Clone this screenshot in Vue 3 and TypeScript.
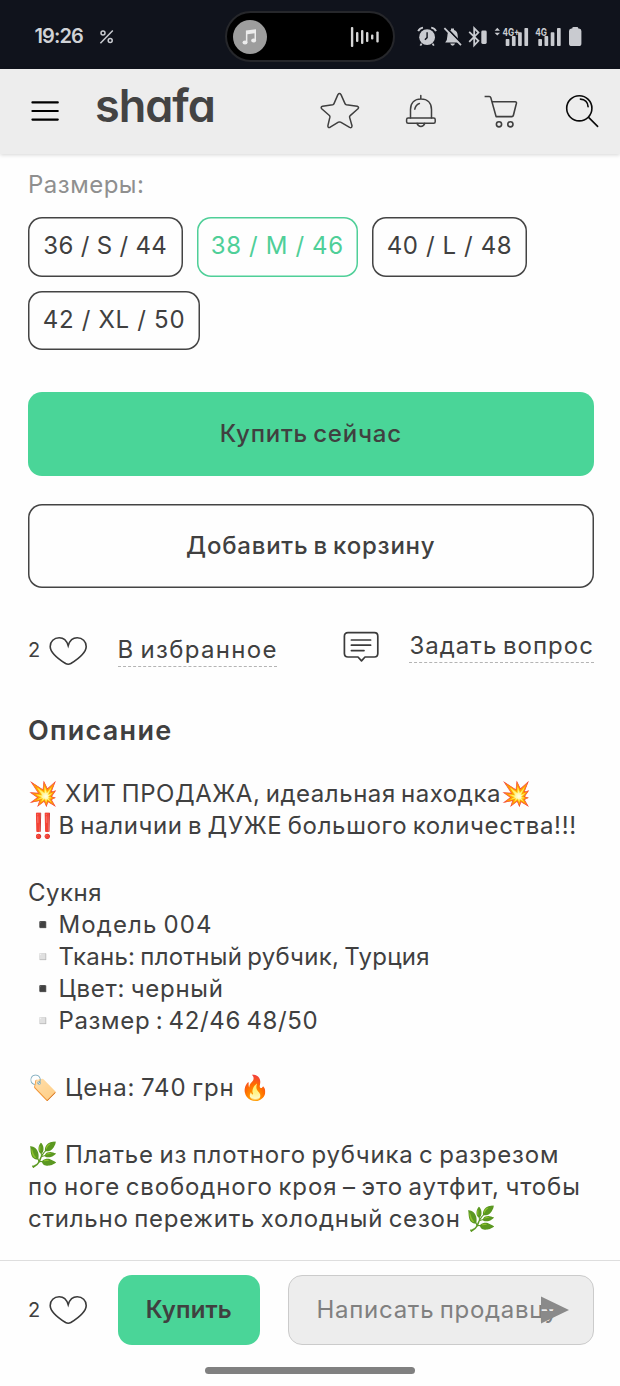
<script setup lang="ts">
interface Run { text: string; ls: number; emoji?: string; tail?: string; tight?: boolean }

const sizes = [
  { label: '36 / S / 44', ls: 0.31, width: 154.5 },
  { label: '38 / M / 46', ls: 0.63, width: 161.5, active: true },
  { label: '40 / L / 48', ls: 0.6, width: 155 },
  { label: '42 / XL / 50', ls: 0.7, width: 172 },
]

const paragraphs: Run[][] = [
  [
    { emoji: '💥', text: 'ХИТ ПРОДАЖА, идеальная находка', ls: 0.54, tail: '💥' },
    { emoji: '‼️', text: 'В наличии в ДУЖЕ большого количества!!!', ls: 0.64, tight: true },
  ],
  [
    { text: 'Сукня', ls: 0.5 },
    { emoji: '▪️', text: 'Модель 004', ls: 1.12, tight: true },
    { emoji: '▫️', text: 'Ткань: плотный рубчик, Турция', ls: 0.28, tight: true },
    { emoji: '▪️', text: 'Цвет: черный', ls: 0.74, tight: true },
    { emoji: '▫️', text: 'Размер : 42/46 48/50', ls: 0.65, tight: true },
  ],
  [{ emoji: '🏷️', text: 'Цена: 740 грн', ls: 0.9, tail: ' 🔥' }],
  [
    { emoji: '🌿', text: 'Платье из плотного рубчика с разрезом', ls: 0.8 },
    { text: 'по ноге свободного кроя – это аутфит, чтобы', ls: 0.88 },
    { text: 'стильно пережить холодный сезон', ls: 0.77, tail: ' 🌿' },
  ],
]

const wave = [
  { x: 0.9, h: 20 }, { x: 6, h: 10 }, { x: 11, h: 14 }, { x: 16, h: 10 }, { x: 21, h: 5 }, { x: 26.3, h: 11 },
]
const heart =
  'M20.2 9.7C18.6 4.2 15.4 1.8 11.2 1.8C6 1.8 2.2 5.4 2.2 10.4C2.2 17.2 11.4 23.6 17.6 27.5Q20.2 28.9 22.8 27.5C29 23.6 38.2 17.2 38.2 10.4C38.2 5.4 34.4 1.8 29.2 1.8C25 1.8 21.8 4.2 20.2 9.7Z'
const bars = [
  { x: 0, y: 17 }, { x: 6.2, y: 14 }, { x: 12.4, y: 10.3 }, { x: 18.7, y: 6 },
]
</script>

<template>
  <div class="screen">
    <div class="status">
      <span class="clock">19:26</span>
      <svg class="percent" width="16" height="16" viewBox="0 0 16 16" fill="none" stroke="#c9cbd0" stroke-width="1.5">
        <circle cx="4" cy="4.1" r="2" /><circle cx="11.2" cy="11.5" r="2" /><path d="M13.8 1.4L1.4 14.2" />
      </svg>
      <div class="island">
        <span class="disc">
          <svg width="20" height="20" viewBox="0 0 20 20" fill="#ececec">
            <path d="M5.9 3.6L16 2.2V13.4H14.5V6.3L7.4 7.2V15.4H5.9Z" />
            <ellipse cx="5" cy="15.4" rx="2.5" ry="2" /><ellipse cx="13.6" cy="13.6" rx="2.5" ry="2" />
          </svg>
        </span>
        <svg width="29" height="22" viewBox="0 0 29 22" fill="#d6d6d6">
          <rect v-for="w in wave" :key="w.x" :x="w.x" :y="11 - w.h / 2" width="2.4" :height="w.h" rx="1" />
        </svg>
      </div>
      <svg class="indicators" width="170" height="30" viewBox="0 0 170 30" fill="#c9cbd0">
        <circle cx="12.1" cy="15.2" r="7.9" />
        <path d="M3.2 9.2Q4.6 6 8 5.6M21 9.2Q19.6 6 16.2 5.6" fill="none" stroke="#c9cbd0" stroke-width="1.9" />
        <path d="M6.6 21.6L5.4 23.6M17.6 21.6L18.8 23.6" stroke="#c9cbd0" stroke-width="1.8" />
        <path d="M12.1 10.2V15.6L9.9 17.8" fill="none" stroke="#10131c" stroke-width="1.4" />
        <path d="M30.2 20.4Q32.4 18.4 32.4 13.8Q32.4 9 36 8V6.5H39V8Q42.7 9 42.7 13.8Q42.7 18.4 45 20.4ZM35.2 21.6H40Q39.5 23.7 37.6 23.7Q35.7 23.7 35.2 21.6Z" />
        <path d="M31.4 5.6L47.4 22.4" stroke="#10131c" stroke-width="1.8" /><path d="M29.4 6.2L46 23.2" stroke="#c9cbd0" stroke-width="1.8" />
        <path d="M54.2 9.8L63.4 18.8L59.2 23.3V6.2L63.4 10.6L54.2 19.8" fill="none" stroke="#c9cbd0" stroke-width="1.8" />
        <rect x="66.3" y="8.6" width="5.4" height="13.4" rx="1.4" />
        <path d="M79.6 8.8L82.3 5.8L85 8.8ZM79.6 10.8L82.3 13.6L85 10.8Z" />
        <text x="87.4" y="13.6" class="net" textLength="17.2" lengthAdjust="spacingAndGlyphs">4G+</text>
        <text x="120.2" y="13.6" class="net" textLength="11.8" lengthAdjust="spacingAndGlyphs">4G</text>
        <rect v-for="b in bars" :key="'a' + b.x" :x="90.7 + b.x" :y="b.y" width="3.7" :height="24 - b.y" rx="0.8" />
        <rect v-for="b in bars" :key="'b' + b.x" :x="123.3 + b.x" :y="b.y" width="3.7" :height="24 - b.y" rx="0.8" />
        <path d="M157.2 6.4Q157.2 5 158.6 5H162Q163.3 5 163.3 6.4H164Q166.4 6.6 166.4 9V21.4Q166.4 24 163.8 24H156.7Q154 24 154 21.4V9Q154 6.6 156.5 6.4Z" />
      </svg>
    </div>

    <header class="header">
      <svg class="menu" width="28" height="22" viewBox="0 0 28 22" stroke="#000" stroke-width="2.1" stroke-linecap="round">
        <path d="M1.4 2.4H26.8M1.4 11H26.8M1.4 19.6H26.8" />
      </svg>
      <span class="logo">shafa</span>
      <nav class="nav">
        <svg width="40" height="40" viewBox="0 0 40 40" fill="none" stroke="#3f3f3f" stroke-width="1.5" stroke-linejoin="round">
          <path d="M17.9 3.6Q19.5 1.4 21 3.6L25 12.6Q25.4 13.6 26.4 13.8L37.2 15.2Q39.4 16 38 17.8L30.2 24.6Q29.3 25.4 29.6 26.4L32 34.8Q31.9 37.4 29.6 36.4L20.6 31.2Q19.5 30.6 18.4 31.2L10.2 36.2Q7.7 37.2 7.9 34.6L9.9 26.2Q10.1 25.2 9.4 24.5L1.7 17.8Q.3 15.8 2.6 15.2L12.7 13.8Q13.6 13.6 14 12.6Z" />
        </svg>
        <svg width="40" height="40" viewBox="0 0 40 40" fill="none" stroke="#3f3f3f" stroke-width="1.5" stroke-linecap="round">
          <path d="M19.8 4.4V8M9.5 27V18.6C9.5 12 13.6 8 20 8S30.5 12 30.5 18.6V27M13.8 18.2Q14.4 14 18.4 12.5M16 32.4Q17.2 35.4 19.9 35.4T23.8 32.4" />
          <rect x="5.6" y="27.1" width="28.6" height="5.2" rx="1.5" />
        </svg>
        <svg width="40" height="40" viewBox="0 0 40 40" fill="none" stroke="#3f3f3f" stroke-width="1.6" stroke-linejoin="round">
          <path d="M3.6 5.5H8.3Q9.5 5.5 9.8 6.6L15.1 25.6H30.8Q32.1 25.6 32.4 24.3L35.4 12.4Q35.7 10.8 34.2 10.8H11" />
          <circle cx="18" cy="33.3" r="2.6" /><circle cx="29.4" cy="33.3" r="2.6" />
        </svg>
        <svg width="40" height="40" viewBox="0 0 40 40" fill="none" stroke="#0a0a0a" stroke-width="1.6" stroke-linecap="round">
          <circle cx="17.3" cy="17.3" r="12.6" /><path d="M26.6 26.4L35.6 35.4M18.4 8.1C23 8.3 26 11.4 26.1 15.8" />
        </svg>
      </nav>
    </header>

    <main class="content">
      <div class="label">Размеры:</div>
      <div class="sizes">
        <button v-for="s in sizes" :key="s.label" class="size" :class="{ active: s.active }" :style="{ width: s.width + 'px', letterSpacing: s.ls + 'px' }">{{ s.label }}</button>
      </div>
      <button class="action primary">Купить сейчас</button>
      <button class="action outline">Добавить в корзину</button>

      <div class="social">
        <span class="count">2</span>
        <svg class="heart" width="40" height="30" viewBox="0 0 40 30" fill="none" stroke="#3a3a3a" stroke-width="1.6"><path :d="heart" /></svg>
        <a class="link fav">В избранное</a>
        <svg class="comment" width="37" height="32" viewBox="0 0 37 32" fill="none" stroke="#3a3a3a" stroke-width="1.7" stroke-linejoin="round" stroke-linecap="round">
          <path d="M5 1.7H31.4Q34.8 1.7 34.8 5.2V22.6Q34.8 26 31.4 26H22L18.5 29.8L15 26H5Q1.4 26 1.4 22.6V5.2Q1.4 1.7 5 1.7Z" />
          <path d="M8.4 9H27.6M8.4 14.2H27.6M8.4 19.6H21" />
        </svg>
        <a class="link ask">Задать вопрос</a>
      </div>

      <h2 class="title">Описание</h2>
      <div class="description">
        <p v-for="(p, i) in paragraphs" :key="i" class="para">
          <span v-for="r in p" :key="r.text" class="line" :style="{ letterSpacing: r.ls + 'px' }"><span v-if="r.emoji" class="emoji" :class="{ tight: r.tight }">{{ r.emoji }}</span>{{ r.text }}{{ r.tail }}</span>
        </p>
      </div>
    </main>

    <footer class="bottom">
      <div class="bar">
        <span class="count">2</span>
        <svg class="heart" width="40" height="30" viewBox="0 0 40 30" fill="none" stroke="#3a3a3a" stroke-width="1.6"><path :d="heart" /></svg>
        <button class="buy">Купить</button>
        <div class="message">
          <span>Написать продавцу</span>
          <svg class="send" width="30" height="28" viewBox="0 0 30 28" fill="#8a8a8a"><path d="M1 .6L29 14L1 27.4V15H14V13.2H1Z" /></svg>
        </div>
      </div>
      <div class="home"></div>
    </footer>
  </div>
</template>

<style>
body { margin: 0; background: #fff; }
</style>

<style scoped>
.screen { width: 620px; height: 1386px; display: flex; flex-direction: column; overflow: hidden; background: #fefefe; color: #404040; font: 400 24px/32px Inter, "Liberation Sans", sans-serif; word-spacing: -2px; }
button { margin: 0; padding: 0; border: 0; background: none; font: inherit; color: inherit; word-spacing: inherit; }
svg { display: block; flex: none; }
.status { height: 69px; flex: none; background: #10131c; display: flex; align-items: flex-start; }
.clock { width: 50px; margin: 23px 0 0 34.5px; font-size: 20px; line-height: 26px; font-weight: 600; letter-spacing: -0.9px; color: #d0d2d6; white-space: nowrap; }
.percent { margin: 29px 0 0 14.5px; }
.island { box-sizing: border-box; width: 170px; height: 51px; margin: 11px 0 0 110px; padding: 0 14px 0 6px; border: 2px solid #26272b; border-radius: 26px; background: #000; display: flex; align-items: center; justify-content: space-between; }
.disc { width: 34px; height: 34px; border-radius: 50%; background: #9d9d9d; display: grid; place-items: center; }
.indicators { margin: 22px 0 0 20px; }
.net { font: 700 10.5px Inter, sans-serif; }
.header { height: 85px; flex: none; display: flex; align-items: flex-start; background: #ededed; box-shadow: 0 1px 4px rgba(0, 0, 0, 0.16); }
.menu { margin: 31px 0 0 31px; }
.logo { width: 124px; margin: 9px 0 0 36px; font-size: 45px; line-height: 56px; font-weight: 600; color: #434343; letter-spacing: -1px; font-feature-settings: "cv11"; }
.nav { display: flex; gap: 40.6px; margin: 22px 0 0 101px; }
.content { flex: 1; min-height: 0; padding: 0 26.5px 0 28px; }
.label { margin-top: 15px; color: #8f8f8f; letter-spacing: 0.5px; }
.sizes { display: flex; flex-wrap: wrap; gap: 14px; margin-top: 16px; word-spacing: 0; }
.size { height: 59.5px; padding-bottom: 1px; border-radius: 14px; box-shadow: inset 0 0 0 1.5px #444; white-space: nowrap; }
.size.active { color: #4fcf98; box-shadow: inset 0 0 0 1.5px #4fcf98; }
.action { display: block; width: 100%; height: 84px; border-radius: 14px; font-weight: 500; }
.primary { margin-top: 42px; background: #4ad598; letter-spacing: 0.78px; }
.outline { margin-top: 28px; box-shadow: inset 0 0 0 1.5px #444; letter-spacing: 0.77px; }
.social { display: flex; align-items: flex-start; height: 100px; padding-top: 43px; box-sizing: border-box; }
.count { width: 20px; font-size: 20px; line-height: 26px; }
.social .count { margin-top: 6px; }
.social .heart { margin-top: 5px; }
.link { border-bottom: 1px dashed #b4b4b4; white-space: nowrap; line-height: 32px; }
.fav { margin: 3px 0 0 30px; width: 159px; letter-spacing: 1.3px; }
.comment { margin-left: 66px; }
.ask { margin: -1px 0 0 29px; width: 185px; letter-spacing: 1px; text-indent: 1px; }
.title { margin: 26px 0 0; font-size: 27px; line-height: 34px; font-weight: 600; letter-spacing: 1.3px; }
.description { display: flex; flex-direction: column; gap: 35px; margin-top: 30px; }
.para { margin: 0; }
.line { display: block; height: 32px; white-space: pre; }
.emoji { display: inline-block; width: 37px; }
.emoji.tight { width: 30.5px; }
.bottom { flex: none; height: 126px; box-sizing: border-box; border-top: 1px solid #dedede; background: #fefefe; }
.bar { display: flex; align-items: center; height: 70px; padding: 14px 26.5px 0 28px; }
.buy { width: 141.5px; height: 70px; margin-left: 30px; border-radius: 14px; background: #4ad598; font-weight: 600; letter-spacing: 0.12px; }
.message { position: relative; box-sizing: border-box; flex: 1; height: 70px; margin-left: 28px; padding-left: 28px; border: 1px solid #cbcbcb; border-radius: 14px; background: #ededed; color: #808080; line-height: 68px; letter-spacing: 0.72px; white-space: nowrap; }
.send { position: absolute; top: 20px; right: 23px; }
.home { width: 210px; height: 7px; margin: 21.5px auto 0; border-radius: 4px; background: #808080; }
</style>
